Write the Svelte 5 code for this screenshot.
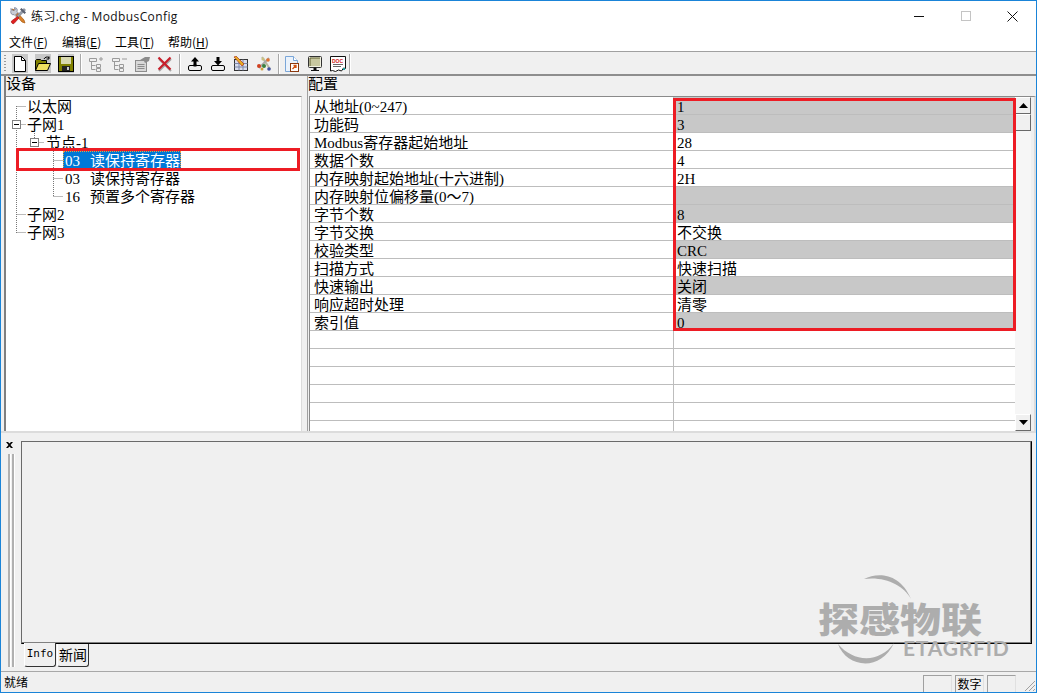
<script>
	const menus = [
		{ name: '文件', key: 'F' },
		{ name: '编辑', key: 'E' },
		{ name: '工具', key: 'T' },
		{ name: '帮助', key: 'H' }
	];

	const rows = [
		{ label: '从地址(0~247)', value: '1', grey: true },
		{ label: '功能码', value: '3', grey: true },
		{ label: 'Modbus寄存器起始地址', value: '28' },
		{ label: '数据个数', value: '4' },
		{ label: '内存映射起始地址(十六进制)', value: '2H' },
		{ label: '内存映射位偏移量(0～7)', value: '', grey: true },
		{ label: '字节个数', value: '8', grey: true },
		{ label: '字节交换', value: '不交换' },
		{ label: '校验类型', value: 'CRC', grey: true },
		{ label: '扫描方式', value: '快速扫描' },
		{ label: '快速输出', value: '关闭', grey: true },
		{ label: '响应超时处理', value: '清零' },
		{ label: '索引值', value: '0', grey: true },
		{ label: '', value: '' },
		{ label: '', value: '' },
		{ label: '', value: '' },
		{ label: '', value: '' },
		{ label: '', value: '' },
		{ label: '', value: '' }
	];

	const tree = [
		{ text: '以太网', level: 0 },
		{ text: '子网1', level: 0 },
		{ text: '节点-1', level: 1 },
		{ text: '03  读保持寄存器', level: 2, selected: true },
		{ text: '03  读保持寄存器', level: 2 },
		{ text: '16  预置多个寄存器', level: 2 },
		{ text: '子网2', level: 0 },
		{ text: '子网3', level: 0 }
	];

	// ascii gets a latin face so digits take half the width of a hanzi
	function runs(text) {
		return text.split(/([\x00-\x7f]+)/).filter(Boolean).map((t) => ({
			t,
			ascii: /^[\x00-\x7f]/.test(t)
		}));
	}
</script>

{#snippet mixed(text)}
	{#each runs(text) as r}<span class={r.ascii ? 'ascii' : ''}>{r.t}</span>{/each}
{/snippet}

<div class="window">
	<header class="titlebar">
		<svg class="appicon" width="18" height="18" viewBox="0 0 18 18">
			<path d="M3 2l3 1 9 10 1 3-3-1L4 5z" fill="#d9822b" stroke="#a85a10" stroke-width=".7" />
			<path d="M2 1.500l2.500 2.500 2-2L5 1C7 0 9 2 8 4.500l1 1-3 3-1-1C3 8.500 1 6 2 3.500z" fill="#c9cdd6" stroke="#66708a" stroke-width=".7" />
			<path d="M15 1.500l1.500 1.500-8 8-1.500-1.500z" fill="#98a0ae" stroke="#5c6474" stroke-width=".6" />
			<path d="M8.500 9.500l1.500 1.500-5 5.500c-1 1-3.500-1-2.500-2.500z" fill="#e02020" stroke="#a01010" stroke-width=".6" />
			<path d="M12.500 1l4.500 4.500-1.500 1.500-4.500-4.500z" fill="#5a6070" />
		</svg>
		<span class="apptitle">练习.chg - ModbusConfig</span>
		<div class="winbtns">
			<span class="winbtn"><svg width="10" height="10"><path d="M0 5.500h10" stroke="#111" /></svg></span>
			<span class="winbtn"><svg width="10" height="10"><rect x=".5" y=".5" width="9" height="9" fill="none" stroke="#c4c4c4" /></svg></span>
			<span class="winbtn"><svg width="11" height="11"><path d="M.5.500l10 10M10.500.500l-10 10" stroke="#111" /></svg></span>
		</div>
	</header>

	<nav class="menubar">
		{#each menus as m}
			<span class="menu">{m.name}(<u>{m.key}</u>)</span>
		{/each}
	</nav>

	<div class="toolbar">
		<span class="gripper"></span>
		<button class="tool on" aria-label="new">
			<svg width="16" height="16"><path d="M2.500.500h7l4 4v11h-11z" fill="#fff" stroke="#000" /><path d="M9.500.500v4h4" fill="none" stroke="#000" /></svg>
		</button>
		<button class="tool on" aria-label="open">
			<svg width="16" height="16"><path d="M.5 14.500v-10l1-1h4l1 1h5v3" fill="#808000" stroke="#000" /><path d="M.5 14.500l3-7h12l-3 7z" fill="#f0e060" stroke="#000" /><path d="M9 3c1-2 3-2.500 5-1.500M14 .5v2.500h-2.500" fill="none" stroke="#000" /></svg>
		</button>
		<button class="tool on" aria-label="save">
			<svg width="16" height="16"><rect x=".5" y=".5" width="15" height="15" fill="#808000" stroke="#000" /><rect x="3" y="1" width="10" height="7" fill="#d8d8b0" /><rect x="4" y="10" width="8" height="5" fill="#222" /><rect x="9" y="11" width="2" height="3" fill="#c8c8c8" /></svg>
		</button>
		<span class="sep"></span>
		<button class="tool" aria-label="add node">
			<svg width="16" height="16" fill="none" stroke="#9a9a9a"><path d="M1.500 2.500h7v3h-7zM3.500 5.500v8M3.500 9.500h4M3.500 13.500h4" /><path d="M8.500 8.500h4v3h-4zM8.500 12.500h4v3h-4z" /><path d="M13 1v4M11 3h4" /></svg>
		</button>
		<button class="tool" aria-label="remove node">
			<svg width="16" height="16" fill="none" stroke="#9a9a9a"><path d="M1.500 2.500h7v3h-7zM3.500 5.500v8M3.500 9.500h4M3.500 13.500h4" /><path d="M8.500 8.500h4v3h-4zM8.500 12.500h4v3h-4z" /><path d="M11 3h5" /></svg>
		</button>
		<button class="tool" aria-label="properties">
			<svg width="17" height="16"><rect x="1.500" y="4.500" width="11" height="11" fill="#d8d8d8" stroke="#8c8c8c" /><path d="M3.500 8.500h7M3.500 10.500h7M3.500 12.500h7" stroke="#8c8c8c" /><path d="M6 4l5-3h5l-1 4-4 2-1-2z" fill="#8c8c8c" /></svg>
		</button>
		<button class="tool" aria-label="delete">
			<svg width="16" height="16"><path d="M2 3l12 12M14 3L2 15" stroke="#a8a8a8" stroke-width="2" /><path d="M1.500 1.500l12 12M13.500 1.500l-12 12" stroke="#c8202c" stroke-width="2.200" /></svg>
		</button>
		<span class="sep"></span>
		<button class="tool" aria-label="upload">
			<svg width="16" height="16"><path d="M8 1l4 4.500H9.500v4h-3v-4H4z" fill="#000" /><rect x="1.500" y="9.500" width="13" height="5" rx="1.500" fill="#f0f0f0" stroke="#000" /><path d="M6.500 8.500h3v2h-3z" fill="#000" /></svg>
		</button>
		<button class="tool" aria-label="download">
			<svg width="16" height="16"><path d="M6.500 1h3v4H12L8 9.500 4 5h2.500z" fill="#000" /><rect x="1.500" y="9.500" width="13" height="5" rx="1.500" fill="#f0f0f0" stroke="#000" /></svg>
		</button>
		<button class="tool" aria-label="edit">
			<svg width="16" height="16"><rect x="1.500" y="3.500" width="13" height="11" fill="#d8dcec" stroke="#333" /><path d="M1.500 7.500h13M1.500 11h13M6 3.500v11M10 3.500v11" stroke="#7c88a8" /><path d="M1 1l2-1 8 8-2 2z" fill="#e8b020" stroke="#b03020" stroke-width=".7" /></svg>
		</button>
		<button class="tool" aria-label="tools">
			<svg width="17" height="16"><path d="M6 1l8 12" stroke="#b8b8a0" stroke-width="2" /><path d="M13 2L3 12" stroke="#a8a8a8" stroke-width="2" /><circle cx="12" cy="4" r="1.800" fill="#e07030" /><circle cx="7" cy="3" r="1.600" fill="#c9c080" /><circle cx="3" cy="10" r="2" fill="#d04020" /><circle cx="8" cy="10" r="2" fill="#3a8040" /><circle cx="13" cy="13" r="1.800" fill="#4050a0" /><circle cx="6" cy="13" r="1.500" fill="#d0a040" /></svg>
		</button>
		<span class="sep tight"></span>
		<button class="tool" aria-label="document">
			<svg width="16" height="16"><path d="M1.500.500h8l4 4v11h-12z" fill="#eaf2fb" stroke="#7aa6d8" /><path d="M9.500.500v4h4" fill="#fff" stroke="#7aa6d8" /><rect x="6.500" y="7.500" width="8" height="8" fill="#fff" stroke="#8c3a10" /><path d="M8.500 13l3.500-3.500M9.500 9.500H12V12" fill="none" stroke="#d05010" stroke-width="1.300" /></svg>
		</button>
		<button class="tool" aria-label="monitor">
			<svg width="16" height="16"><rect x="1.500" y=".5" width="13" height="11" rx="1" fill="#f0f0e0" stroke="#333" /><rect x="3" y="2" width="10" height="8" fill="#c8c8a0" /><path d="M3 2h10M3 2v8" stroke="#606030" /><path d="M7 12h2v2H7zM4 14.500h8" stroke="#111" /></svg>
		</button>
		<button class="tool" aria-label="doc note">
			<svg width="16" height="16"><path d="M.5.500h15v12l-2-.5-2 3-3-1-3 1.500-3-1-2 .5z" fill="#fff" stroke="#111" /><text x="2" y="6.500" class="doctext">DOC</text><path d="M3 8.500h10M3 10.500h8" stroke="#666" /><rect x="13" y="12" width="2" height="2" fill="#20a0a0" /></svg>
		</button>
		<span class="sep last"></span>
	</div>

	<section class="panes">
		<div class="pane left">
			<div class="pane-head">设备</div>
			<div class="treebox">
				<svg class="treelines" width="290" height="150">
					<g fill="none" stroke="#777" stroke-dasharray="1 1">
						<path d="M10.500 9v127M10.500 9.500h10M14.500 27.500h6M10.500 117.500h10M10.500 135.500h10" />
						<path d="M28.500 32v13M32.500 45.500h6" />
						<path d="M47.500 50v49M47.500 63.500h10M47.500 81.500h10M47.500 99.500h10" />
					</g>
				</svg>
				<svg class="box b1" width="9" height="9"><rect x=".5" y=".5" width="8" height="8" fill="#fff" stroke="#808080" /><path d="M2 4.500h5" stroke="#000" /></svg>
				<svg class="box b2" width="9" height="9"><rect x=".5" y=".5" width="8" height="8" fill="#fff" stroke="#808080" /><path d="M2 4.500h5" stroke="#000" /></svg>
				{#each tree as n}
					<div class="node lv{n.level}"><span class="nodetext" class:selected={n.selected}>{@render mixed(n.text)}</span></div>
				{/each}
				<span class="mark-tree"></span>
			</div>
		</div>
		<div class="pane right">
			<div class="pane-head">配置</div>
			<div class="gridbox">
				<div class="grid">
					{#each rows as r}
						<div class="row">
							<div class="cell name">{@render mixed(r.label)}</div>
							<div class="cell val" class:grey={r.grey}>{@render mixed(r.value)}</div>
						</div>
					{/each}
				</div>
				<div class="scroll">
					<span class="sbtn"><svg width="9" height="5"><path d="M4.500 0L9 5H0z" fill="#000" /></svg></span>
					<span class="thumb"></span>
					<span class="track"></span>
					<span class="sbtn"><svg width="9" height="5"><path d="M0 0h9L4.500 5z" fill="#000" /></svg></span>
				</div>
				<span class="mark-grid"></span>
			</div>
		</div>
	</section>

	<section class="lower">
		<aside class="dock">
			<svg width="7" height="6"><path d="M0 0h2l1.500 1.500L5 0h2L4.500 3 7 6H5L3.500 4.500 2 6H0l2.500-3z" fill="#000" /></svg>
			<div class="grips"><i></i><i></i></div>
		</aside>
		<div class="info">
			<div class="output"></div>
			<div class="tabs">
				<span class="tab active">Info</span>
				<span class="tab">新闻</span>
			</div>
		</div>
		<div class="watermark">
			<svg width="90" height="95" viewBox="0 0 90 95">
				<path d="M26 6C40-1 62 0 73 26 66 12 46 3 26 6z" fill="#adadad" />
				<path d="M0 71C8 94 42 100 56 70 42 90 16 90 0 71z" fill="#adadad" />
			</svg>
			<span class="wm-cn">探感物联</span>
			<span class="wm-en">ETAGRFID</span>
		</div>
	</section>

	<footer class="status">
		<span class="ready">就绪</span>
		<span class="ind"></span>
		<span class="ind">数字</span>
		<span class="ind"></span>
		<svg class="sizer" width="12" height="12"><path d="M11 1L1 11M11 5l-6 6M11 9l-2 2" stroke="#a0a0a0" /></svg>
	</footer>
</div>

<style>
	:global(body) {
		margin: 0;
		background: #f0f0f0;
	}

	.window {
		box-sizing: border-box;
		width: 1037px;
		height: 693px;
		border: 1px solid #1a84d8;
		background: #f0f0f0;
		display: flex;
		flex-direction: column;
		overflow: hidden;
		position: relative;
		color: #000;
		font-family: 'Noto Sans CJK SC', 'Liberation Sans', sans-serif;
		font-size: 15px;
	}

	.ascii {
		font-family: 'Liberation Serif', serif;
		font-size: 15px;
		word-spacing: 1.25px;
		white-space: pre;
	}

	.titlebar {
		height: 30px;
		background: #fff;
		display: flex;
		align-items: center;
		padding-left: 8px;
		flex: none;
	}

	.appicon {
		margin-right: 4px;
	}

	.apptitle {
		font-family: 'Open Sans', 'Noto Sans CJK SC', sans-serif;
		font-size: 12px;
		letter-spacing: 0.4px;
		color: #111;
	}

	.winbtns {
		margin-left: auto;
		display: flex;
	}

	.winbtn {
		width: 47px;
		height: 30px;
		display: flex;
		align-items: center;
		justify-content: center;
	}

	.menubar {
		height: 20px;
		background: #fff;
		display: flex;
		gap: 14px;
		padding-left: 8px;
		align-items: center;
		font-size: 12px;
		flex: none;
	}

	.menu {
		width: 39px;
		white-space: nowrap;
	}

	.toolbar {
		height: 21px;
		flex: none;
		display: flex;
		align-items: center;
		border-top: 1px solid #a0a0a0;
		border-bottom: 2px solid #8e8e8e;
		padding-top: 1px;
	}

	.gripper {
		width: 2px;
		height: 17px;
		margin: 0 6px 0 3px;
		background: repeating-linear-gradient(#9a9a9a 0 1px, transparent 1px 3px);
	}

	.tool {
		width: 16px;
		height: 19px;
		margin-right: 7px;
		padding: 0;
		border: none;
		background: transparent;
		display: flex;
		align-items: center;
		justify-content: center;
		flex: none;
	}

	.tool svg {
		flex: none;
	}

	.tool.on {
		background: #c8c8c8;
	}

	.doctext {
		font-family: 'Liberation Sans', sans-serif;
		font-size: 5px;
		font-weight: 700;
		fill: #d02020;
	}

	.sep {
		width: 1px;
		height: 20px;
		background: #a8a8a8;
		border-right: 1px solid #fff;
		margin-right: 6px;
		margin-left: -1px;
	}

	.sep.tight {
		margin-right: 4px;
	}

	.sep.last {
		margin-left: -4px;
	}

	.panes {
		height: 355px;
		flex: none;
		display: flex;
		border-bottom: 2px solid #dcdcdc;
	}

	.pane {
		display: flex;
		flex-direction: column;
	}

	.pane.left {
		width: 296px;
		margin-left: 3px;
		border-left: 2px solid #808080;
	}

	.pane.right {
		margin-left: 5px;
		width: 728px;
		border-left: 1px solid #a0a0a0;
	}

	.pane-head {
		height: 20px;
		line-height: 14px;
		flex: none;
	}

	.treebox {
		position: relative;
		flex: 1;
		background: #fff;
		border-top: 1px solid #8a8a8a;
		border-right: 1px solid #dcdcdc;
	}

	.treelines {
		position: absolute;
		left: 0;
		top: 0;
	}

	.box {
		position: absolute;
	}

	.b1 {
		left: 6px;
		top: 23px;
	}

	.b2 {
		left: 24px;
		top: 41px;
	}

	.node {
		display: flex;
		height: 18px;
		position: relative;
		white-space: pre;
	}

	.lv0 {
		padding-left: 21px;
	}

	.lv1 {
		padding-left: 40px;
	}

	.lv2 {
		padding-left: 57px;
	}

	.nodetext {
		height: 18px;
		line-height: 17px;
	}

	.lv2 .nodetext {
		padding: 0 1px 0 2px;
	}

	.nodetext.selected {
		background: #0078d7;
		color: #fff;
		outline: 1px dotted #e8a040;
		outline-offset: -1px;
	}

	.mark-tree {
		position: absolute;
		left: 10px;
		top: 51px;
		width: 278px;
		height: 17px;
		border: 3px solid #ed1c24;
	}

	.gridbox {
		position: relative;
		flex: 1;
		display: flex;
		margin-left: 1px;
		border-top: 1px solid #8a8a8a;
		border-left: 1px solid #8a8a8a;
		border-right: 2px solid #dcdcdc;
		overflow: hidden;
	}

	.grid {
		width: 705px;
		background: #fff;
		overflow: hidden;
		flex: none;
	}

	.row {
		display: grid;
		grid-template-columns: 363px 1fr;
		height: 18px;
		box-sizing: border-box;
		border-bottom: 1px solid #bdbdbd;
	}

	.cell {
		line-height: 17px;
		height: 17px;
		white-space: pre;
	}

	.name {
		padding-left: 4px;
	}

	.val {
		border-left: 1px solid #bdbdbd;
		padding-left: 3px;
	}

	.val.grey {
		background: #c8c8c8;
	}

	.scroll {
		width: 16px;
		display: flex;
		flex-direction: column;
		background: #f6f6f6;
	}

	.sbtn,
	.thumb {
		box-sizing: border-box;
		width: 16px;
		background: #f0f0f0;
		border: 1px solid;
		border-color: #fff #696969 #696969 #fff;
		flex: none;
	}

	.sbtn {
		height: 17px;
		display: flex;
		align-items: center;
		justify-content: center;
	}

	.thumb {
		height: 17px;
	}

	.track {
		flex: 1;
	}

	.mark-grid {
		position: absolute;
		left: 363px;
		top: 1px;
		width: 337px;
		height: 227px;
		border: 3px solid #ed1c24;
	}

	.lower {
		position: relative;
		flex: 1;
		display: flex;
		min-height: 0;
	}

	.dock {
		width: 20px;
		padding: 9px 0 0 5px;
		box-sizing: border-box;
		display: flex;
		flex-direction: column;
		flex: none;
	}

	.dock svg {
		flex: none;
	}

	.grips {
		display: flex;
		gap: 1px;
		margin: 6px 0 0 2px;
		height: 213px;
	}

	.grips i {
		width: 2px;
		background: #b0b0b0;
		border-right: 1px solid #fff;
	}

	.info {
		flex: 1;
		display: flex;
		flex-direction: column;
		margin-right: 4px;
		padding-top: 8px;
	}

	.output {
		height: 201px;
		border: 1px solid;
		border-color: #6a6a6a #000 #000 #6a6a6a;
		box-shadow: inset -1px -1px 0 #808080;
	}

	.tabs {
		display: flex;
		gap: 1px;
		padding-left: 3px;
	}

	.tab {
		height: 23px;
		line-height: 21px;
		box-sizing: border-box;
		width: 32px;
		text-align: center;
		border: 1px solid;
		border-top: none;
		border-color: #fff #333 #333 #fff;
		border-radius: 0 0 3px 3px;
		font-size: 14px;
	}

	.tab.active {
		font-family: 'DejaVu Sans Mono', monospace;
		font-size: 11px;
		height: 24px;
		margin-top: -1px;
		background: #f0f0f0;
		position: relative;
	}

	.watermark {
		position: absolute;
		left: 837px;
		top: 140px;
		width: 195px;
		height: 95px;
		color: #adadad;
		pointer-events: none;
	}

	.watermark svg {
		position: absolute;
		left: 0;
		top: 0;
	}

	.wm-cn {
		position: absolute;
		left: -20px;
		top: 26px;
		font-size: 41px;
		line-height: 44px;
		font-weight: 900;
		white-space: nowrap;
		transform: scaleY(0.85);
		transform-origin: top left;
	}

	.wm-en {
		position: absolute;
		left: 65px;
		top: 63px;
		font-family: Lato, sans-serif;
		font-size: 21px;
		line-height: 24px;
		letter-spacing: 0.8px;
		font-weight: 700;
		white-space: nowrap;
	}

	.status {
		height: 20px;
		flex: none;
		border-top: 1px solid #a8a8a8;
		display: flex;
		align-items: flex-end;
		gap: 3px;
		font-size: 12px;
		position: relative;
		padding-right: 20px;
	}

	.ready {
		margin: 0 auto 1px 3px;
		line-height: 18px;
	}

	.ind {
		box-sizing: border-box;
		width: 29px;
		height: 17px;
		line-height: 16px;
		text-align: center;
		border-top: 1px solid #a0a0a0;
		border-left: 1px solid #a0a0a0;
		border-right: 1px solid #e0e0e0;
	}

	.sizer {
		position: absolute;
		right: 0;
		bottom: 0;
	}
</style>
